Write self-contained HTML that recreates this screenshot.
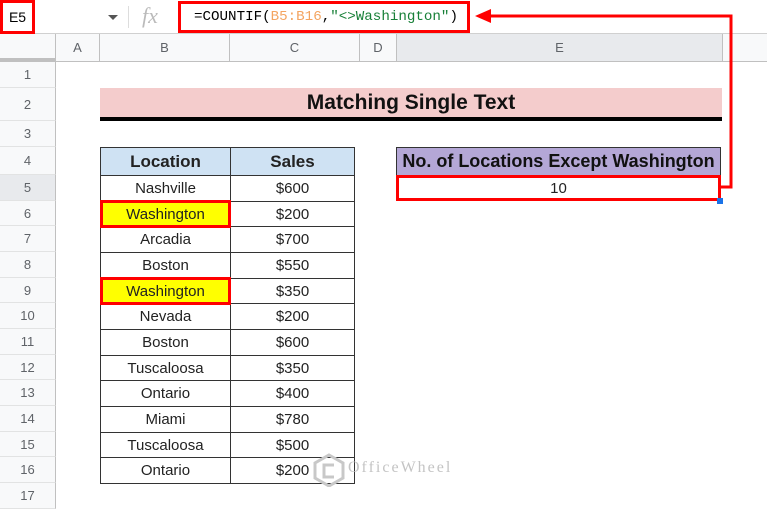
<!DOCTYPE html>
<html><head><meta charset="utf-8"><style>
body{margin:0;width:767px;height:507px;overflow:hidden;background:#fff;font-family:"Liberation Sans",Arial,sans-serif;position:relative}
.a{position:absolute;box-sizing:border-box}
.rh{position:absolute;left:0;width:56px;background:#f8f9fa;border-bottom:1px solid #e2e3e3;border-right:1px solid #c0c0c0;color:#5f6368;font-size:13px;display:flex;align-items:center;justify-content:center;box-sizing:border-box}
.ch{position:absolute;top:34px;height:28px;background:#f8f9fa;border-right:1px solid #c0c0c0;border-bottom:1px solid #c0c0c0;color:#5f6368;font-size:13px;display:flex;align-items:center;justify-content:center;box-sizing:border-box}
.c{position:absolute;display:flex;align-items:center;justify-content:center;font-size:15px;color:#222;box-sizing:border-box;border:1px solid #333}
.b{left:100px;width:131px}
.s{left:230px;width:125px}
.hl{background:#ff0;border:3px solid #f00;z-index:2}
</style></head><body>
<div class="a" style="left:0;top:0;width:767px;height:34px;border-bottom:1px solid #d0d0d0;background:#fff"></div>
<div class="a" style="left:0;top:0;width:35px;height:34px;border:3px solid #f00;font-size:14px;display:flex;align-items:center;justify-content:center;color:#000">E5</div>
<div class="a" style="left:108px;top:15px;width:0;height:0;border-left:5px solid transparent;border-right:5px solid transparent;border-top:5px solid #555"></div>
<div class="a" style="left:128px;top:6px;width:1px;height:22px;background:#ddd"></div>
<div class="a" style="left:142px;top:3px;font-family:'Liberation Serif',serif;font-style:italic;font-size:22px;color:#bbb">fx</div>
<div class="a" style="left:178px;top:1px;width:292px;height:32px;border:3px solid #f00;font-family:'Liberation Mono',monospace;font-size:14.2px;padding-left:13px;display:flex;align-items:center;color:#000;letter-spacing:0">=COUNTIF(<span style="color:#f4a460">B5:B16</span>,<span style="color:#188038">"&lt;&gt;Washington"</span>)</div>
<div class="ch" style="left:0;width:56px"></div>
<div class="ch" style="left:56px;width:44px">A</div>
<div class="ch" style="left:100px;width:130px">B</div>
<div class="ch" style="left:230px;width:130px">C</div>
<div class="ch" style="left:360px;width:37px">D</div>
<div class="ch" style="left:397px;width:326px;background:#e8eaed">E</div>
<div class="ch" style="left:723px;width:44px;border-right:none"></div>
<div class="a" style="left:0;top:58px;width:56px;height:4px;background:#c0c0c0"></div>
<div class="rh" style="top:62px;height:26px">1</div>
<div class="rh" style="top:88px;height:33px">2</div>
<div class="rh" style="top:121px;height:26px">3</div>
<div class="rh" style="top:147px;height:28px">4</div>
<div class="rh" style="top:175px;height:26px;background:#e8eaed">5</div>
<div class="rh" style="top:201px;height:25px">6</div>
<div class="rh" style="top:226px;height:26px">7</div>
<div class="rh" style="top:252px;height:26px">8</div>
<div class="rh" style="top:278px;height:25px">9</div>
<div class="rh" style="top:303px;height:26px">10</div>
<div class="rh" style="top:329px;height:26px">11</div>
<div class="rh" style="top:355px;height:25px">12</div>
<div class="rh" style="top:380px;height:26px">13</div>
<div class="rh" style="top:406px;height:26px">14</div>
<div class="rh" style="top:432px;height:25px">15</div>
<div class="rh" style="top:457px;height:26px">16</div>
<div class="rh" style="top:483px;height:26px">17</div>
<div class="a" style="left:100px;top:88px;width:622px;height:30px;background:#f4cccc;font-weight:bold;font-size:21px;display:flex;align-items:center;justify-content:center;color:#111">Matching Single Text</div>
<div class="a" style="left:100px;top:117px;width:622px;height:4px;background:#000"></div>
<div class="c b" style="top:147px;height:29px;background:#cfe2f3;font-weight:bold;font-size:17px">Location</div>
<div class="c s" style="top:147px;height:29px;background:#cfe2f3;font-weight:bold;font-size:17px">Sales</div>
<div class="c b" style="top:175px;height:27px">Nashville</div><div class="c s" style="top:175px;height:27px">$600</div>
<div class="c b hl" style="top:200px;height:28px">Washington</div><div class="c s" style="top:201px;height:26px">$200</div>
<div class="c b" style="top:226px;height:27px">Arcadia</div><div class="c s" style="top:226px;height:27px">$700</div>
<div class="c b" style="top:252px;height:27px">Boston</div><div class="c s" style="top:252px;height:27px">$550</div>
<div class="c b hl" style="top:277px;height:28px">Washington</div><div class="c s" style="top:278px;height:26px">$350</div>
<div class="c b" style="top:303px;height:27px">Nevada</div><div class="c s" style="top:303px;height:27px">$200</div>
<div class="c b" style="top:329px;height:27px">Boston</div><div class="c s" style="top:329px;height:27px">$600</div>
<div class="c b" style="top:355px;height:26px">Tuscaloosa</div><div class="c s" style="top:355px;height:26px">$350</div>
<div class="c b" style="top:380px;height:27px">Ontario</div><div class="c s" style="top:380px;height:27px">$400</div>
<div class="c b" style="top:406px;height:27px">Miami</div><div class="c s" style="top:406px;height:27px">$780</div>
<div class="c b" style="top:432px;height:26px">Tuscaloosa</div><div class="c s" style="top:432px;height:26px">$500</div>
<div class="c b" style="top:457px;height:27px">Ontario</div><div class="c s" style="top:457px;height:27px">$200</div>
<div class="c" style="left:396px;top:147px;width:325px;height:29px;background:#b4a7d6;font-weight:bold;font-size:18px;color:#111">No. of Locations Except Washington</div>
<div class="c" style="left:396px;top:175px;width:325px;height:26px;border:3px solid #f00;font-size:15px">10</div>
<div class="a" style="left:717px;top:198px;width:6px;height:6px;background:#1a73e8"></div>
<svg class="a" style="left:0;top:0" width="767" height="507">
<polyline points="721,187 731,187 731,16 488,16" fill="none" stroke="#f00" stroke-width="3"/>
<polygon points="475,16 491,9 491,23" fill="#f00"/>
</svg>
<svg class="a" style="left:312px;top:453px" width="34" height="34"><polygon points="17,2 31,10 31,25 17,33 3,25 3,10" fill="none" stroke="#c8c8c8" stroke-width="3"/><path d="M22,12 L12,12 L12,24 L22,24" fill="none" stroke="#c8c8c8" stroke-width="3"/></svg>
<div class="a" style="left:348px;top:459px;font-family:'Liberation Serif',serif;font-size:16px;letter-spacing:2px;color:#c4c4c4">OfficeWheel</div>
</body></html>
